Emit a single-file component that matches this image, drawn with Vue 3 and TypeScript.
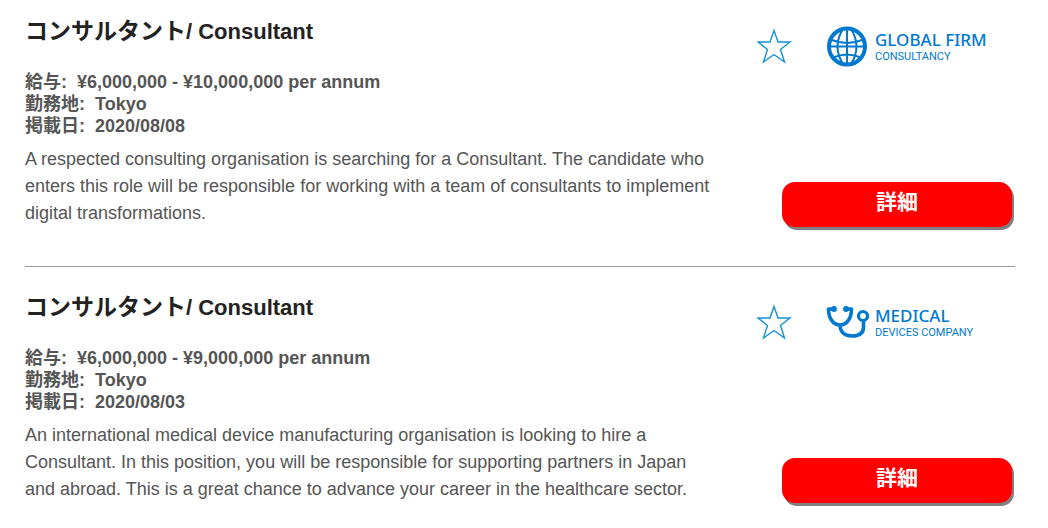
<script setup lang="ts">
import { reactive } from 'vue'

interface Job {
  id: number
  titleJa: string
  titleEn: string
  salary: string
  location: string
  posted: string
  description: string
  logo: 'globe' | 'stethoscope'
  company: string
  sector: string
  saved: boolean
}

const jobs = reactive<Job[]>([
  {
    id: 1,
    titleJa: 'コンサルタント',
    titleEn: '/ Consultant',
    salary: '¥6,000,000 - ¥10,000,000 per annum',
    location: 'Tokyo',
    posted: '2020/08/08',
    description:
      'A respected consulting organisation is searching for a Consultant. The candidate who enters this role will be responsible for working with a team of consultants to implement digital transformations.',
    logo: 'globe',
    company: 'GLOBAL FIRM',
    sector: 'CONSULTANCY',
    saved: false,
  },
  {
    id: 2,
    titleJa: 'コンサルタント',
    titleEn: '/ Consultant',
    salary: '¥6,000,000 - ¥9,000,000 per annum',
    location: 'Tokyo',
    posted: '2020/08/03',
    description:
      'An international medical device manufacturing organisation is looking to hire a Consultant. In this position, you will be responsible for supporting partners in Japan and abroad. This is a great chance to advance your career in the healthcare sector.',
    logo: 'stethoscope',
    company: 'MEDICAL',
    sector: 'DEVICES COMPANY',
    saved: false,
  },
])
</script>

<template>
  <main class="jobs">
    <article v-for="job in jobs" :key="job.id" class="job">
      <div class="details">
        <h2 class="title"><span lang="ja">{{ job.titleJa }}</span><span class="latin">{{ job.titleEn }}</span></h2>
        <ul class="meta">
          <li>給与:&nbsp; {{ job.salary }}</li>
          <li>勤務地:&nbsp; {{ job.location }}</li>
          <li>掲載日:&nbsp; {{ job.posted }}</li>
        </ul>
        <p class="description">{{ job.description }}</p>
      </div>
      <div class="side">
        <div class="brand">
          <button
            type="button"
            class="star"
            :class="{ saved: job.saved }"
            :aria-pressed="job.saved"
            aria-label="Save job"
            @click="job.saved = !job.saved"
          >
            <svg viewBox="0 0 36 36" width="36" height="36" aria-hidden="true">
              <path d="M17 2.500 L21 14 H33 L23.500 21.500 L27.500 34 L17 26.500 L6.500 34 L10.500 21.500 L1 14 H13 Z" />
            </svg>
          </button>
          <div class="logo">
            <svg v-if="job.logo === 'globe'" class="mark" viewBox="0 0 44 42" aria-hidden="true">
              <circle cx="22" cy="21.500" r="18" stroke-width="4" />
              <path
                stroke-width="2"
                d="M22 3.500V39.500M4 21.500H40M7 15Q22 21 37 15M7 33Q22 26 37 33M18 4Q7 21.500 18 39M26 4Q37 21.500 26 39"
              />
            </svg>
            <svg v-else class="mark" viewBox="0 0 44 42" aria-hidden="true">
              <path
                stroke-width="3.6"
                stroke-linejoin="round"
                d="M8 8H3.500C3.500 17 8 24 15 24S26.500 17 26.500 8H22M15 24C15 31 20 35 27 35C35 35 38.500 32 38.500 26V20"
              />
              <circle cx="9" cy="8" r="2.900" class="dot" />
              <circle cx="21" cy="8" r="2.900" class="dot" />
              <circle cx="38" cy="15" r="4.500" stroke-width="3.200" />
            </svg>
            <div class="names">
              <span class="company">{{ job.company }}</span>
              <span class="sector">{{ job.sector }}</span>
            </div>
          </div>
        </div>
        <button type="button" class="more">詳細</button>
      </div>
    </article>
  </main>
</template>

<style>
body {
  margin: 0;
  background: #fff;
}
</style>

<style scoped>
.jobs {
  padding: 0 33px 0 25px;
  color: #555;
  font-family: "Liberation Sans", Arial, "Noto Sans CJK JP", sans-serif;
  font-size: 18px;
}

.job {
  display: flex;
  justify-content: space-between;
  gap: 40px;
  padding: 27px 0 39px;
}

.job:first-child {
  padding-top: 18px;
}

.job + .job {
  border-top: 1px solid #999;
}

.details {
  flex: 1;
  max-width: 692px;
}

.title {
  margin: 0 0 26px;
  color: #222;
  font-size: 23px;
  line-height: 26px;
  font-weight: 700;
}

.latin {
  font-size: 22px;
}

.meta {
  margin: 0 0 9px;
  padding: 0;
  list-style: none;
  font-weight: 700;
  line-height: 22px;
}

.description {
  margin: 0;
  line-height: 27px;
}

.side {
  display: flex;
  flex: none;
  flex-direction: column;
  justify-content: space-between;
  width: 258px;
  padding-top: 7px;
  box-sizing: border-box;
}

.brand {
  display: flex;
  align-items: center;
  gap: 32px;
}

.star {
  display: block;
  padding: 0;
  border: 0;
  background: none;
  cursor: pointer;
}

.star svg {
  display: block;
  fill: none;
  stroke: #1592d2;
  stroke-width: 1.4;
}

.star.saved svg {
  fill: #1592d2;
}

.logo {
  display: flex;
  align-items: center;
  gap: 6px;
  color: #0079cf;
}

.mark {
  display: block;
  width: 44px;
  height: 42px;
  fill: none;
  stroke: currentColor;
}

.dot {
  fill: currentColor;
  stroke: none;
}

.names {
  display: flex;
  flex-direction: column;
  padding-top: 4px;
  white-space: nowrap;
}

.company {
  font-family: "Noto Sans", sans-serif;
  font-size: 17px;
  font-weight: 500;
  line-height: 18px;
}

.sector {
  font-family: Roboto, sans-serif;
  font-size: 11px;
  line-height: 16px;
}

.more {
  align-self: flex-end;
  width: 230px;
  height: 45px;
  margin-right: 3px;
  padding: 0 0 10px;
  border: 0;
  border-radius: 13px;
  background: #f00;
  box-shadow: 2px 3px 0 #808080;
  color: #fff;
  font-family: inherit;
  font-size: 21px;
  font-weight: 700;
  cursor: pointer;
}
</style>
